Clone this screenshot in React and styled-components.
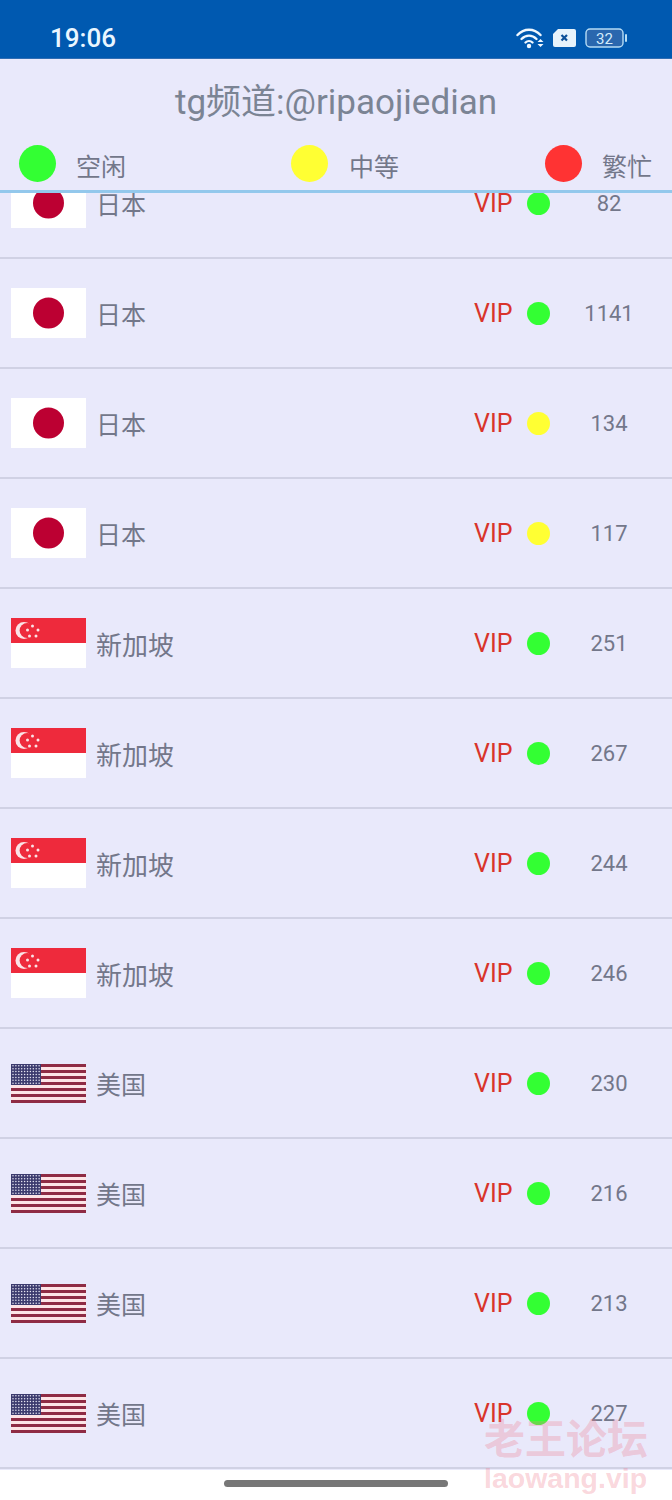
import React from "react";
import styled, { createGlobalStyle } from "styled-components";

const GlobalStyle = createGlobalStyle`
  html, body {
    margin: 0;
    padding: 0;
    background: #ffffff;
  }
  body {
    font-family: Roboto, "Noto Sans CJK SC", sans-serif;
  }
`;

const Page = styled.div`
  position: relative;
  width: 672px;
  height: 1500px;
  overflow: hidden;
  display: flex;
  flex-direction: column;
`;

const StatusBar = styled.div`
  height: 59px;
  flex: none;
  background: #0059b0;
  border-bottom: 1px solid #2f6db3;
  box-sizing: border-box;
  display: flex;
  align-items: center;
  justify-content: space-between;
  padding: 18px 44px 0 50px;
`;

const Clock = styled.div`
  font-size: 26px;
  font-weight: 500;
  color: #eaf6ff;
`;

const StatusIcons = styled.div`
  display: flex;
  align-items: center;
  gap: 9px;
`;

const Header = styled.div`
  flex: none;
  height: 134px;
  box-sizing: border-box;
  background: #e9e9fb;
  border-bottom: 3px solid #93c8ec;
  display: flex;
  flex-direction: column;
`;

const Title = styled.div`
  margin-top: 22px;
  height: 44px;
  line-height: 44px;
  text-align: center;
  font-size: 35px;
  color: #7b8494;
`;

const Legend = styled.div`
  margin-top: 19px;
  padding-left: 19px;
  display: grid;
  grid-template-columns: 272px 254px auto;
`;

const LegendItem = styled.div`
  display: flex;
  align-items: center;
  height: 38px;
`;

const LegendDot = styled.span`
  width: 37px;
  height: 37px;
  border-radius: 50%;
  background: ${(p) => p.$color};
  margin-right: ${(p) => p.$gap}px;
`;

const LegendLabel = styled.span`
  font-size: 25px;
  color: #73778a;
  margin-top: 3px;
`;

const ListViewport = styled.div`
  flex: none;
  height: 1277px;
  background: #e9e9fb;
  overflow: hidden;
`;

const List = styled.div`
  margin-top: -44px;
`;

const Row = styled.div`
  height: 110px;
  box-sizing: border-box;
  border-bottom: 2px solid #d0d1e4;
  padding-left: 11px;
  display: flex;
  align-items: center;
`;

const FlagBox = styled.div`
  width: 75px;
  height: 50px;
  flex: none;
  display: flex;
  align-items: center;
`;

const Country = styled.div`
  margin-left: 10px;
  width: 378px;
  font-size: ${(p) => p.$size}px;
  color: #73778a;
`;

const Vip = styled.div`
  width: 40px;
  font-size: 25px;
  color: #d9342b;
`;

const Dot = styled.span`
  width: 23px;
  height: 23px;
  margin-left: 13px;
  border-radius: 50%;
  background: ${(p) => p.$color};
`;

const Count = styled.div`
  width: 96px;
  margin-left: 11px;
  text-align: center;
  font-size: 22px;
  color: #73778a;
`;

const Watermark = styled.div`
  position: absolute;
  left: 484px;
  top: 1412px;
  color: rgba(240, 120, 140, 0.3);
  font-weight: 700;
`;

const WatermarkTitle = styled.div`
  font-family: "Noto Sans CJK SC", sans-serif;
  font-size: 41px;
  line-height: 48px;
`;

const WatermarkSite = styled.div`
  font-family: "Liberation Sans", sans-serif;
  font-size: 28.5px;
  line-height: 34px;
  margin-top: 1px;
`;

const HomeBar = styled.div`
  position: absolute;
  left: 224px;
  bottom: 13px;
  width: 224px;
  height: 7px;
  border-radius: 4px;
  background: #777777;
`;

const GREEN = "#33ff33";
const YELLOW = "#ffff33";
const RED = "#ff3333";

const WifiIcon = () => (
  <svg width="28" height="22" viewBox="0 0 28 22" fill="none" stroke="#f0f8ff" strokeLinecap="round">
    <path d="M1.5 8 C8 1 18 1 24.5 8" strokeWidth="2.4" />
    <path d="M5.5 12 C10 7.5 16 7.5 20.5 12" strokeWidth="2.4" />
    <path d="M9.5 15.5 C11.5 13.6 14.5 13.6 16.5 15.5" strokeWidth="2.4" />
    <circle cx="13" cy="19" r="2.2" fill="#f0f8ff" stroke="none" />
    <path d="M21.5 15 L24.5 12 L27.5 15 Z M21.5 17 L27.5 17 L24.5 20 Z" fill="#f0f8ff" stroke="none" />
  </svg>
);

const SimIcon = () => (
  <svg width="23" height="18" viewBox="0 0 23 18">
    <path d="M5 0 H21 a2 2 0 0 1 2 2 V16 a2 2 0 0 1 -2 2 H2 a2 2 0 0 1 -2 -2 V5 Z" fill="#e6f2fb" />
    <path d="M8.5 6 L14 11.5 M14 6 L8.5 11.5" stroke="#0b4f98" strokeWidth="2.2" />
  </svg>
);

const BatteryIcon = () => (
  <svg width="43" height="20" viewBox="0 0 43 20">
    <rect x="1" y="1" width="37" height="18" rx="4" fill="#2a67ae" stroke="#b5dcf5" strokeWidth="1.4" />
    <rect x="40" y="6" width="2" height="8" rx="1" fill="#b5dcf5" />
    <text x="19.5" y="15.5" textAnchor="middle" fontSize="15" fontFamily="Roboto, sans-serif" fill="#d5ecfb">32</text>
  </svg>
);

const JapanFlag = () => (
  <svg width="75" height="50" viewBox="0 0 75 50">
    <rect width="75" height="50" fill="#ffffff" />
    <circle cx="37.5" cy="25" r="15.5" fill="#bc0032" />
  </svg>
);

// five stars around the crescent, drawn as small dots
const SG_STARS = [[21.5, 8], [27, 12], [25, 18], [18.5, 18], [16.5, 12]];

const SingaporeFlag = () => (
  <svg width="75" height="50" viewBox="0 0 75 50">
    <rect width="75" height="50" fill="#ffffff" />
    <rect width="75" height="25" fill="#ee2a3c" />
    <circle cx="13" cy="12.5" r="8.5" fill="#fbe3e6" />
    <circle cx="16.2" cy="12.5" r="7.6" fill="#ee2a3c" />
    {SG_STARS.map(([x, y]) => (
      <circle key={x} cx={x} cy={y} r="1.5" fill="#fbe3e6" />
    ))}
  </svg>
);

const USA_STRIPES = [0, 1, 2, 3, 4, 5, 6];
const USA_COLS = [0, 1, 2, 3, 4, 5, 6, 7, 8, 9];
const USA_ROWS = [0, 1, 2, 3, 4, 5, 6];

const UsaFlag = () => (
  <svg width="75" height="39" viewBox="0 0 75 39">
    <rect width="75" height="39" fill="#fde4e6" />
    {USA_STRIPES.map((i) => (
      <rect key={i} y={i * 6} width="75" height="3" fill="#8f2b44" />
    ))}
    <rect width="30" height="21" fill="#3c3b6e" />
    {USA_ROWS.map((r) =>
      USA_COLS.map((c) => (
        <circle key={`${r}-${c}`} cx={2 + c * 2.9} cy={1.8 + r * 2.9} r="0.75" fill="#e6e6f2" />
      ))
    )}
  </svg>
);

const COUNTRIES = {
  jp: { name: "日本", Flag: JapanFlag, size: 25 },
  sg: { name: "新加坡", Flag: SingaporeFlag, size: 26 },
  us: { name: "美国", Flag: UsaFlag, size: 25 },
};

const ROWS = [
  ["jp", GREEN, 82],
  ["jp", GREEN, 1141],
  ["jp", YELLOW, 134],
  ["jp", YELLOW, 117],
  ["sg", GREEN, 251],
  ["sg", GREEN, 267],
  ["sg", GREEN, 244],
  ["sg", GREEN, 246],
  ["us", GREEN, 230],
  ["us", GREEN, 216],
  ["us", GREEN, 213],
  ["us", GREEN, 227],
];

const App = () => {
  return (
    <Page>
      <GlobalStyle />
      <StatusBar>
        <Clock>19:06</Clock>
        <StatusIcons>
          <WifiIcon />
          <SimIcon />
          <BatteryIcon />
        </StatusIcons>
      </StatusBar>
      <Header>
        <Title>tg频道:@ripaojiedian</Title>
        <Legend>
          <LegendItem>
            <LegendDot $color={GREEN} $gap={20} />
            <LegendLabel>空闲</LegendLabel>
          </LegendItem>
          <LegendItem>
            <LegendDot $color={YELLOW} $gap={21} />
            <LegendLabel>中等</LegendLabel>
          </LegendItem>
          <LegendItem>
            <LegendDot $color={RED} $gap={20} />
            <LegendLabel>繁忙</LegendLabel>
          </LegendItem>
        </Legend>
      </Header>
      <ListViewport>
        <List>
          {ROWS.map(([code, color, count], i) => {
            const { name, Flag, size } = COUNTRIES[code];
            return (
              <Row key={i}>
                <FlagBox>
                  <Flag />
                </FlagBox>
                <Country $size={size}>{name}</Country>
                <Vip>VIP</Vip>
                <Dot $color={color} />
                <Count>{count}</Count>
              </Row>
            );
          })}
        </List>
      </ListViewport>
      <HomeBar />
      <Watermark>
        <WatermarkTitle>老王论坛</WatermarkTitle>
        <WatermarkSite>laowang.vip</WatermarkSite>
      </Watermark>
    </Page>
  );
};

export default App;
